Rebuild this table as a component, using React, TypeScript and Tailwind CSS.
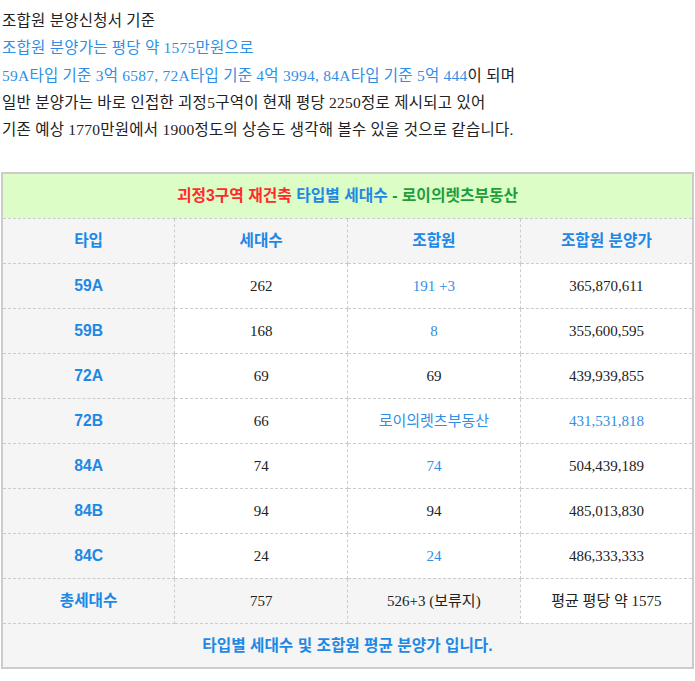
import React from 'react';

type Row = {
  type: string;
  units: string;
  members: string;
  price: string;
  membersBlue?: boolean;
  priceBlue?: boolean;
};

const rows: Row[] = [
  { type: '59A', units: '262', members: '191 +3', price: '365,870,611', membersBlue: true },
  { type: '59B', units: '168', members: '8', price: '355,600,595', membersBlue: true },
  { type: '72A', units: '69', members: '69', price: '439,939,855' },
  { type: '72B', units: '66', members: '로이의렛츠부동산', price: '431,531,818', membersBlue: true, priceBlue: true },
  { type: '84A', units: '74', members: '74', price: '504,439,189', membersBlue: true },
  { type: '84B', units: '94', members: '94', price: '485,013,830' },
  { type: '84C', units: '24', members: '24', price: '486,333,333', membersBlue: true },
];

const serif = "font-['Liberation_Serif','Noto_Sans_CJK_KR',serif]";
const sans = "font-['Liberation_Sans','Noto_Sans_CJK_KR',sans-serif]";
const cell = 'h-[45px] p-0 text-center border border-dashed border-[#cccccc]';
const data = `${cell} text-[15px]`;
const head = `${cell} ${sans} font-bold text-[15.7px] text-[#1e88e5] bg-[#f5f5f5]`;

const App: React.FC = () => {
  return (
    <div className={`w-[695px] min-h-[681px] bg-white ${serif} text-[#222]`}>
      <div className="pt-[7px] pl-[2px] text-[15.5px] tracking-[0.25px] leading-[27.3px]">
        <p>조합원 분양신청서 기준</p>
        <p className="text-[#2f8fe6]">조합원 분양가는 평당 약 1575만원으로</p>
        <p>
          <span className="text-[#2f8fe6]">59A타입 기준 3억 6587, 72A타입 기준 4억 3994, 84A타입 기준 5억 444</span>이 되며
        </p>
        <p>일반 분양가는 바로 인접한 괴정5구역이 현재 평당 2250정로 제시되고 있어</p>
        <p>기존 예상 1770만원에서 1900정도의 상승도 생각해 볼수 있을 것으로 같습니다.</p>
      </div>

      <div className="pt-[29px] pl-px">
        <table className="w-[693px] table-fixed border-collapse border-2 border-solid border-[#cccccc]">
          <tbody>
            <tr>
              <td colSpan={4} className={`${cell} ${sans} font-bold text-[15.8px] bg-[#dcfdc5]`}>
                <span className="text-[#ff2b2b]">괴정3구역 재건축 </span>
                <span className="text-[#1e88e5]">타입별 세대수 </span>
                <span className="text-[#1f9d3c]">- 로이의렛츠부동산</span>
              </td>
            </tr>
            <tr>
              <td className={head}>타입</td>
              <td className={head}>세대수</td>
              <td className={head}>조합원</td>
              <td className={head}>조합원 분양가</td>
            </tr>
            {rows.map((r) => (
              <tr key={r.type}>
                <td className={head}>{r.type}</td>
                <td className={`${data} bg-white`}>{r.units}</td>
                <td className={`${data} bg-white ${r.membersBlue ? 'text-[#2f8fe6]' : ''}`}>{r.members}</td>
                <td className={`${data} bg-white ${r.priceBlue ? 'text-[#2f8fe6]' : ''}`}>{r.price}</td>
              </tr>
            ))}
            <tr>
              <td className={head}>총세대수</td>
              <td className={`${data} bg-[#f5f5f5]`}>757</td>
              <td className={`${data} bg-[#f5f5f5]`}>526+3 (보류지)</td>
              <td className={`${data} bg-white`}>평균 평당 약 1575</td>
            </tr>
            <tr>
              <td colSpan={4} className={head}>
                타입별 세대수 및 조합원 평균 분양가 입니다.
              </td>
            </tr>
          </tbody>
        </table>
      </div>
    </div>
  );
};

export default App;
